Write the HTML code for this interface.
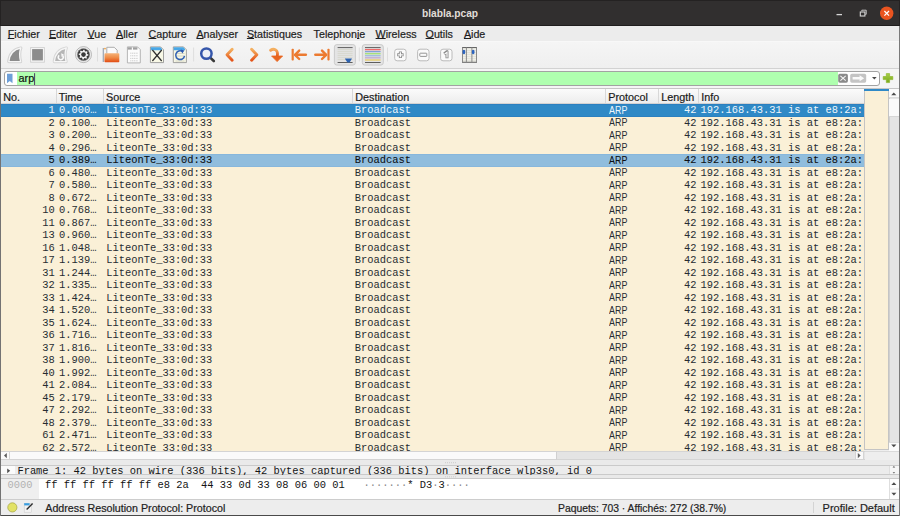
<!DOCTYPE html>
<html><head><meta charset="utf-8">
<style>
*{margin:0;padding:0;box-sizing:border-box}
html,body{width:900px;height:516px;overflow:hidden;background:#efefef;font-family:"Liberation Sans",sans-serif;}
div,span{position:absolute}
u{position:static}
.ov{position:absolute;left:0;top:0;z-index:50}
#title{left:0;top:0;width:900px;height:25.8px;background:#312f2f;border:1px solid #242222;border-bottom:1.2px solid #1f1d1d}
#title .t{left:-1px;width:900px;top:6.1px;text-align:center;color:#e0ddd8;font-weight:bold;font-size:10.2px;line-height:13px}
#menubar{left:0;top:25.8px;width:900px;height:15.3px;background:#ececec}
.mi{top:27.9px;font-size:10.7px;line-height:13px;color:#1e1e1e;white-space:nowrap;-webkit-text-stroke:0.2px #1e1e1e}
.mi u{text-decoration:underline;text-underline-offset:0px;text-decoration-thickness:1.3px}
#toolbar{left:0;top:41.1px;width:900px;height:27.3px;background:linear-gradient(#f5f5f5,#efefef);border-top:1px solid #f8f8f8}
#tbline{left:0;top:68.2px;width:900px;height:1px;background:#d2d2d2}
#fbar{left:0;top:69.2px;width:900px;height:19px;background:#f5f5f5}
#fbox{left:3.6px;top:71.3px;width:876px;height:14.9px;border:1px solid #a2a2a2;border-radius:3px;background:#fff;overflow:hidden}
#fgreen{left:12px;top:0;width:821.2px;height:100%;background:#afffaf}
#ftext{left:18.6px;top:72.2px;font-size:10.8px;line-height:13px;color:#101010;-webkit-text-stroke:0.2px #101010}
#tframe{left:0;top:88.2px;width:900px;height:1px;background:#c6c6c6}
#hdr{left:1px;top:89px;width:862.8px;height:14.7px;background:linear-gradient(#fbfbfb,#ededed);border-bottom:1px solid #d2d2d2}
.hc{top:0;height:13.7px;border-right:1px solid #d8d8d8;font-size:10.8px;line-height:17.4px;color:#1a1a1a;padding-left:2.2px;white-space:nowrap;-webkit-text-stroke:0.2px #1a1a1a}
#rows{left:1px;top:103.7px;width:862.8px;height:347.3px;background:#faf0d7;overflow:hidden}
.row{left:0;width:862.8px;height:12.5px;font-family:"Liberation Mono",monospace;font-size:10.42px;line-height:12.5px;color:#262c32;white-space:nowrap}
.row span{top:0.5px;transform:scaleY(1.08);transform-origin:50% 58%}
.row.sel{height:13px;background:#2f89c6;box-shadow:inset 0 1px 0 #2b7fc0,inset 0 -1px 0 #2b80c0;color:#eef6fc}
.row.rel{height:12.9px;background:#90bddd;box-shadow:inset 0 1px 0 #87b7dc,inset 0 -1px 0 #87b7dc;color:#0c1014;-webkit-text-stroke:0.08px #0c1014}
.no{right:809.00px;text-align:right}
.tm{left:58px}
.src{left:105.2px}
.dst{left:353.8px}
.row span.pr{left:607.9px;top:0.9px;font-family:"Liberation Sans",sans-serif;font-size:10px;transform:scaleX(0.89);transform-origin:0 50%;letter-spacing:0.1px}
.ln{right:167.20px;text-align:right}
.inf{left:699.6px}
#mini{left:863.8px;top:89.4px;width:25.2px;height:361px;background:#faf0d7;border-left:1px solid #c4c4c4;border-right:1px solid #c4c4c4;border-bottom:1px solid #c4c4c4}
#minisel{left:863.8px;top:89.4px;width:25.2px;height:1.8px;background:#2f89c7}
#vs{left:889px;top:89px;width:10px;height:362px;background:#e4e4e4;border-left:1px solid #cfcfcf}
#vsup{left:889.4px;top:89px;width:9.6px;height:9px;background:#fbfbfb;border-bottom:1px solid #dcdcdc}
#vsh{left:889.4px;top:99px;width:9.6px;height:17.7px;background:#fafafa;border-bottom:1px solid #d6d6d6}
#vsdn{left:889.4px;top:441.6px;width:9.6px;height:9.4px;background:#fbfbfb;border-top:1px solid #dcdcdc}
#hs{left:1px;top:451px;width:863.5px;height:9.2px;background:#e4e4e4;border-top:1px solid #d4d4d4;border-bottom:1px solid #d4d4d4}
#hsl{left:1px;top:451px;width:9.4px;height:9.2px;background:#fafafa;border:1px solid #d4d4d4;border-left:none}
#hsh{left:10.4px;top:451px;width:546.6px;height:9.2px;background:#fafafa;border-top:1px solid #d4d4d4;border-bottom:1px solid #d4d4d4;border-right:1px solid #d0d0d0}
#hsr{left:854.8px;top:451px;width:9.7px;height:9.2px;background:#fafafa;border:1px solid #d4d4d4}
#corner{left:864.5px;top:451px;width:34.5px;height:9.2px;background:#eeeeee;border-top:1px solid #dadada}
#split1{left:0;top:460.2px;width:900px;height:5px;background:#eaeaea}
#detail{left:1px;top:465.2px;width:898px;height:9.6px;background:#ececec;border-top:1px solid #cacaca;border-bottom:1px solid #cacaca}
#dexp{left:1px;top:466.2px;width:14.3px;height:7.6px;background:#fbfbfb}
#dsb{left:889.3px;top:466.2px;width:9.7px;height:7.6px;background:#f6f6f6;border-left:1px solid #dedede}
#dtext{left:17.4px;top:464.9px;transform:scaleY(1.08);transform-origin:0 60%;font-family:"Liberation Mono",monospace;font-size:10.42px;line-height:13px;color:#141414;white-space:nowrap}
#split2{left:0;top:474.8px;width:900px;height:3.5px;background:#e9e9e9}
#hex{left:1px;top:478.2px;width:898px;height:21.2px;background:#fff;border-top:1px solid #cacaca}
#hexoff{left:1px;top:479.2px;width:37.7px;height:20.2px;background:#efefef}
#hsb{left:889.3px;top:479.2px;width:9.7px;height:20.2px;background:#f0f0f0;border-left:1px solid #dedede}
#hsbup{left:889.8px;top:479.2px;width:9.2px;height:9px;background:#fdfdfd}
#hsbdn{left:889.8px;top:490px;width:9.2px;height:9.4px;background:#fdfdfd}
#hoff{left:7.6px;top:479.4px;transform:scaleY(1.08);transform-origin:0 60%;font-family:"Liberation Mono",monospace;font-size:10.42px;line-height:13px;color:#b2b2b2;white-space:pre}
#hextext{left:45px;top:479.4px;transform:scaleY(1.08);transform-origin:0 60%;font-family:"Liberation Mono",monospace;font-size:10.42px;line-height:13px;color:#141414;white-space:pre}
#status{left:0;top:499.4px;width:900px;height:16.6px;background:#ededed;border-top:1px solid #cdcdcd}
#sbot{left:0;top:514.8px;width:900px;height:1.2px;background:#4a4a4a}
.st{top:502.1px;font-size:10.7px;line-height:13px;color:#222;white-space:nowrap;-webkit-text-stroke:0.2px #222}
#ssep1{left:812.6px;top:502px;width:1px;height:11px;background:#d4d4d4}
#lborder{left:0;top:25.8px;width:1px;height:490.2px;background:#737373}
#rborder{left:898.8px;top:25.8px;width:1.2px;height:490.2px;background:#7a7a7a}
</style></head><body>
<div id="title"><div class="t">blabla.pcap</div></div>
<div id="menubar"></div>
<div class="mi" style="left:7.8px"><u>F</u>ichier</div>
<div class="mi" style="left:48.9px"><u>E</u>diter</div>
<div class="mi" style="left:87.5px"><u>V</u>ue</div>
<div class="mi" style="left:116.1px"><u>A</u>ller</div>
<div class="mi" style="left:148.6px"><u>C</u>apture</div>
<div class="mi" style="left:196.4px"><u>A</u>nalyser</div>
<div class="mi" style="left:246.9px"><u>S</u>tatistiques</div>
<div class="mi" style="left:313.6px">Telephon<u>i</u>e</div>
<div class="mi" style="left:375.6px"><u>W</u>ireless</div>
<div class="mi" style="left:425.6px"><u>O</u>utils</div>
<div class="mi" style="left:463.9px"><u>A</u>ide</div>
<div id="toolbar"></div>
<div id="tbline"></div>
<div id="fbar"></div>
<div id="fbox"><div id="fgreen"></div></div>
<div id="ftext">arp</div>
<div id="tframe"></div>
<div id="hdr">
<div class="hc" style="left:0;width:55.6px">No.</div>
<div class="hc" style="left:55.6px;width:47.3px">Time</div>
<div class="hc" style="left:102.9px;width:249.1px">Source</div>
<div class="hc" style="left:352px;width:253.1px">Destination</div>
<div class="hc" style="left:605.1px;width:52.9px">Protocol</div>
<div class="hc" style="left:658px;width:40px">Length</div>
<div class="hc" style="left:698px;width:164.79999999999995px;border-right:none">Info</div>
</div>
<div id="rows">
<div class="row sel" style="top:0.00px"><span class="no">1</span><span class="tm">0.000…</span><span class="src">LiteonTe_33:0d:33</span><span class="dst">Broadcast</span><span class="pr">ARP</span><span class="ln">42</span><span class="inf">192.168.43.31 is at e8:2a:</span></div>
<div class="row" style="top:12.50px"><span class="no">2</span><span class="tm">0.100…</span><span class="src">LiteonTe_33:0d:33</span><span class="dst">Broadcast</span><span class="pr">ARP</span><span class="ln">42</span><span class="inf">192.168.43.31 is at e8:2a:</span></div>
<div class="row" style="top:25.00px"><span class="no">3</span><span class="tm">0.200…</span><span class="src">LiteonTe_33:0d:33</span><span class="dst">Broadcast</span><span class="pr">ARP</span><span class="ln">42</span><span class="inf">192.168.43.31 is at e8:2a:</span></div>
<div class="row" style="top:37.50px"><span class="no">4</span><span class="tm">0.296…</span><span class="src">LiteonTe_33:0d:33</span><span class="dst">Broadcast</span><span class="pr">ARP</span><span class="ln">42</span><span class="inf">192.168.43.31 is at e8:2a:</span></div>
<div class="row rel" style="top:50.00px"><span class="no">5</span><span class="tm">0.389…</span><span class="src">LiteonTe_33:0d:33</span><span class="dst">Broadcast</span><span class="pr">ARP</span><span class="ln">42</span><span class="inf">192.168.43.31 is at e8:2a:</span></div>
<div class="row" style="top:62.50px"><span class="no">6</span><span class="tm">0.480…</span><span class="src">LiteonTe_33:0d:33</span><span class="dst">Broadcast</span><span class="pr">ARP</span><span class="ln">42</span><span class="inf">192.168.43.31 is at e8:2a:</span></div>
<div class="row" style="top:75.00px"><span class="no">7</span><span class="tm">0.580…</span><span class="src">LiteonTe_33:0d:33</span><span class="dst">Broadcast</span><span class="pr">ARP</span><span class="ln">42</span><span class="inf">192.168.43.31 is at e8:2a:</span></div>
<div class="row" style="top:87.50px"><span class="no">8</span><span class="tm">0.672…</span><span class="src">LiteonTe_33:0d:33</span><span class="dst">Broadcast</span><span class="pr">ARP</span><span class="ln">42</span><span class="inf">192.168.43.31 is at e8:2a:</span></div>
<div class="row" style="top:100.00px"><span class="no">10</span><span class="tm">0.768…</span><span class="src">LiteonTe_33:0d:33</span><span class="dst">Broadcast</span><span class="pr">ARP</span><span class="ln">42</span><span class="inf">192.168.43.31 is at e8:2a:</span></div>
<div class="row" style="top:112.50px"><span class="no">11</span><span class="tm">0.867…</span><span class="src">LiteonTe_33:0d:33</span><span class="dst">Broadcast</span><span class="pr">ARP</span><span class="ln">42</span><span class="inf">192.168.43.31 is at e8:2a:</span></div>
<div class="row" style="top:125.00px"><span class="no">13</span><span class="tm">0.960…</span><span class="src">LiteonTe_33:0d:33</span><span class="dst">Broadcast</span><span class="pr">ARP</span><span class="ln">42</span><span class="inf">192.168.43.31 is at e8:2a:</span></div>
<div class="row" style="top:137.50px"><span class="no">16</span><span class="tm">1.048…</span><span class="src">LiteonTe_33:0d:33</span><span class="dst">Broadcast</span><span class="pr">ARP</span><span class="ln">42</span><span class="inf">192.168.43.31 is at e8:2a:</span></div>
<div class="row" style="top:150.00px"><span class="no">17</span><span class="tm">1.139…</span><span class="src">LiteonTe_33:0d:33</span><span class="dst">Broadcast</span><span class="pr">ARP</span><span class="ln">42</span><span class="inf">192.168.43.31 is at e8:2a:</span></div>
<div class="row" style="top:162.50px"><span class="no">31</span><span class="tm">1.244…</span><span class="src">LiteonTe_33:0d:33</span><span class="dst">Broadcast</span><span class="pr">ARP</span><span class="ln">42</span><span class="inf">192.168.43.31 is at e8:2a:</span></div>
<div class="row" style="top:175.00px"><span class="no">32</span><span class="tm">1.335…</span><span class="src">LiteonTe_33:0d:33</span><span class="dst">Broadcast</span><span class="pr">ARP</span><span class="ln">42</span><span class="inf">192.168.43.31 is at e8:2a:</span></div>
<div class="row" style="top:187.50px"><span class="no">33</span><span class="tm">1.424…</span><span class="src">LiteonTe_33:0d:33</span><span class="dst">Broadcast</span><span class="pr">ARP</span><span class="ln">42</span><span class="inf">192.168.43.31 is at e8:2a:</span></div>
<div class="row" style="top:200.00px"><span class="no">34</span><span class="tm">1.520…</span><span class="src">LiteonTe_33:0d:33</span><span class="dst">Broadcast</span><span class="pr">ARP</span><span class="ln">42</span><span class="inf">192.168.43.31 is at e8:2a:</span></div>
<div class="row" style="top:212.50px"><span class="no">35</span><span class="tm">1.624…</span><span class="src">LiteonTe_33:0d:33</span><span class="dst">Broadcast</span><span class="pr">ARP</span><span class="ln">42</span><span class="inf">192.168.43.31 is at e8:2a:</span></div>
<div class="row" style="top:225.00px"><span class="no">36</span><span class="tm">1.716…</span><span class="src">LiteonTe_33:0d:33</span><span class="dst">Broadcast</span><span class="pr">ARP</span><span class="ln">42</span><span class="inf">192.168.43.31 is at e8:2a:</span></div>
<div class="row" style="top:237.50px"><span class="no">37</span><span class="tm">1.816…</span><span class="src">LiteonTe_33:0d:33</span><span class="dst">Broadcast</span><span class="pr">ARP</span><span class="ln">42</span><span class="inf">192.168.43.31 is at e8:2a:</span></div>
<div class="row" style="top:250.00px"><span class="no">38</span><span class="tm">1.900…</span><span class="src">LiteonTe_33:0d:33</span><span class="dst">Broadcast</span><span class="pr">ARP</span><span class="ln">42</span><span class="inf">192.168.43.31 is at e8:2a:</span></div>
<div class="row" style="top:262.50px"><span class="no">40</span><span class="tm">1.992…</span><span class="src">LiteonTe_33:0d:33</span><span class="dst">Broadcast</span><span class="pr">ARP</span><span class="ln">42</span><span class="inf">192.168.43.31 is at e8:2a:</span></div>
<div class="row" style="top:275.00px"><span class="no">41</span><span class="tm">2.084…</span><span class="src">LiteonTe_33:0d:33</span><span class="dst">Broadcast</span><span class="pr">ARP</span><span class="ln">42</span><span class="inf">192.168.43.31 is at e8:2a:</span></div>
<div class="row" style="top:287.50px"><span class="no">45</span><span class="tm">2.179…</span><span class="src">LiteonTe_33:0d:33</span><span class="dst">Broadcast</span><span class="pr">ARP</span><span class="ln">42</span><span class="inf">192.168.43.31 is at e8:2a:</span></div>
<div class="row" style="top:300.00px"><span class="no">47</span><span class="tm">2.292…</span><span class="src">LiteonTe_33:0d:33</span><span class="dst">Broadcast</span><span class="pr">ARP</span><span class="ln">42</span><span class="inf">192.168.43.31 is at e8:2a:</span></div>
<div class="row" style="top:312.50px"><span class="no">48</span><span class="tm">2.379…</span><span class="src">LiteonTe_33:0d:33</span><span class="dst">Broadcast</span><span class="pr">ARP</span><span class="ln">42</span><span class="inf">192.168.43.31 is at e8:2a:</span></div>
<div class="row" style="top:325.00px"><span class="no">61</span><span class="tm">2.471…</span><span class="src">LiteonTe_33:0d:33</span><span class="dst">Broadcast</span><span class="pr">ARP</span><span class="ln">42</span><span class="inf">192.168.43.31 is at e8:2a:</span></div>
<div class="row" style="top:337.50px"><span class="no">62</span><span class="tm">2.572…</span><span class="src">LiteonTe_33:0d:33</span><span class="dst">Broadcast</span><span class="pr">ARP</span><span class="ln">42</span><span class="inf">192.168.43.31 is at e8:2a:</span></div>
</div>
<div id="mini"></div>
<div id="minisel"></div>
<div id="vs"></div><div id="vsup"></div><div id="vsh"></div><div id="vsdn"></div>
<div id="hs"></div><div id="hsl"></div><div id="hsh"></div><div id="hsr"></div>
<div id="corner"></div>
<div id="split1"></div>
<div id="detail"></div><div id="dexp"></div><div id="dsb"></div>
<div id="dtext">Frame 1: 42 bytes on wire (336 bits), 42 bytes captured (336 bits) on interface wlp3s0, id 0</div>
<div id="split2"></div>
<div id="hex"></div><div id="hexoff"></div><div id="hsb"></div><div id="hsbup"></div><div id="hsbdn"></div>
<div id="hoff">0000</div>
<div id="hextext">ff ff ff ff ff ff e8 2a  44 33 0d 33 08 06 00 01   <span style="position:static;color:#8a8a8a">·······</span>* D3<span style="position:static;color:#8a8a8a">·</span>3<span style="position:static;color:#8a8a8a">····</span></div>
<div id="status"></div>
<div id="ssep1"></div>
<div class="st" style="left:45.3px">Address Resolution Protocol: Protocol</div>
<div class="st" style="left:558px;font-size:10.35px">Paquets: 703 · Affichés: 272 (38.7%)</div>
<div class="st" style="left:822.6px;font-size:11px">Profile: Default</div>
<div id="sbot"></div>
<div id="lborder"></div>
<div id="rborder"></div>
<svg class="ov" width="900" height="516" viewBox="0 0 900 516">
<defs>
<linearGradient id="og" x1="0" y1="0" x2="0" y2="1"><stop offset="0" stop-color="#f4b060"/><stop offset="1" stop-color="#e4541a"/></linearGradient>
<linearGradient id="fold" x1="0" y1="0" x2="0" y2="1"><stop offset="0" stop-color="#f5b37a"/><stop offset="0.5" stop-color="#ef8a45"/><stop offset="1" stop-color="#e14a12"/></linearGradient>
<linearGradient id="pg" x1="0" y1="0" x2="0" y2="1"><stop offset="0" stop-color="#a8d048"/><stop offset="1" stop-color="#78a818"/></linearGradient>
</defs>
<line x1="836.5" y1="14.6" x2="842" y2="14.6" stroke="#d6d6d6" stroke-width="1.3"/>
<rect x="860.3" y="12" width="4.6" height="4" fill="none" stroke="#d6d6d6" stroke-width="1.1"/>
<path d="M861.8 11.2 V10.2 H866.2 V14.3 H865.3" fill="none" stroke="#d6d6d6" stroke-width="0.9"/>
<circle cx="886.7" cy="13.3" r="6.7" fill="#e95420"/>
<path d="M884.4 11 L889 15.6 M889 11 L884.4 15.6" stroke="#fff" stroke-width="1.25"/>
<path d="M8.8 61.6 C9.4 55 13 49.6 20.8 48 C19.4 51.5 19.4 57 20.6 61.6 Z" fill="none" stroke="#d2d2d2" stroke-width="3.2" stroke-linejoin="round"/>
<path d="M8.8 61.6 C9.4 55 13 49.6 20.8 48 C19.4 51.5 19.4 57 20.6 61.6 Z" fill="#8c8c8c" stroke="#f6f6f6" stroke-width="1.3" stroke-linejoin="round"/>
<rect x="30.6" y="47.6" width="13.8" height="14.6" fill="#f6f6f6" stroke="#d0d0d0" stroke-width="0.9"/>
<rect x="32.1" y="49.1" width="10.8" height="11.3" fill="#8c8c8c"/>
<path d="M54.3 61.6 C54.9 55 58.5 49.6 66.3 48 C64.9 51.5 64.9 57 66.1 61.6 Z" fill="none" stroke="#d6d6d6" stroke-width="3.2" stroke-linejoin="round"/>
<path d="M54.3 61.6 C54.9 55 58.5 49.6 66.3 48 C64.9 51.5 64.9 57 66.1 61.6 Z" fill="#b6b6b6" stroke="#f6f6f6" stroke-width="1.3" stroke-linejoin="round"/>
<path d="M59.2 55.3 A2.5 2.5 0 1 0 62.6 55.6" fill="none" stroke="#fafafa" stroke-width="1.6"/>
<path d="M61.2 53.2 L63.8 54.6 L61.6 57 Z" fill="#fafafa"/>
<circle cx="83.5" cy="54.6" r="8" fill="#efefef" stroke="#a8a8a8" stroke-width="0.8"/>
<circle cx="83.5" cy="54.6" r="6.2" fill="#3c3c3c" stroke="#8a8a8a" stroke-width="0.5"/>
<polygon points="88.40,54.60 88.31,55.56 86.83,55.98 86.49,56.60 86.96,58.06 86.22,58.67 84.88,57.93 84.20,58.13 83.50,59.50 82.54,59.41 82.12,57.93 81.50,57.59 80.04,58.06 79.43,57.32 80.17,55.98 79.97,55.30 78.60,54.60 78.69,53.64 80.17,53.22 80.51,52.60 80.04,51.14 80.78,50.53 82.12,51.27 82.80,51.07 83.50,49.70 84.46,49.79 84.88,51.27 85.50,51.61 86.96,51.14 87.57,51.88 86.83,53.22 87.03,53.90" fill="#f4f4f4"/>
<circle cx="83.5" cy="54.6" r="2.3" fill="#3a3a3a"/>
<line x1="97.5" y1="47.5" x2="97.5" y2="61.5" stroke="#dedede" stroke-width="1"/>
<line x1="193.6" y1="47.5" x2="193.6" y2="61.5" stroke="#dedede" stroke-width="1"/>
<line x1="359.3" y1="47.5" x2="359.3" y2="61.5" stroke="#dedede" stroke-width="1"/>
<line x1="387.5" y1="47.5" x2="387.5" y2="61.5" stroke="#dedede" stroke-width="1"/>
<path d="M103.3 48 V62" stroke="#9aa4b0" stroke-width="1.2"/>
<circle cx="105" cy="48.6" r="0.9" fill="#f0a040"/>
<path d="M106.8 53.5 V47.3 H114.2 L117.2 50.2 V53.5" fill="#fbfbfb" stroke="#9a9a9a" stroke-width="0.8"/>
<rect x="104.5" y="53.2" width="14.8" height="9.1" rx="0.8" fill="url(#fold)"/>
<path d="M127.4 46.9 H137.6 L140.3 49.6 V62.9 H127.4 Z" fill="#fcfcfc" stroke="#a4a4a4" stroke-width="0.8"/>
<rect x="127.8" y="47.3" width="4" height="2.3" fill="#a0a0a0"/><rect x="133" y="47.3" width="4.4" height="2.3" fill="#a0a0a0"/>
<line x1="130.2" y1="53.2" x2="138" y2="53.2" stroke="#c8c8c8" stroke-width="0.9" stroke-dasharray="1.2 0.6"/>
<line x1="130.2" y1="55.8" x2="138" y2="55.8" stroke="#c8c8c8" stroke-width="0.9" stroke-dasharray="1.2 0.6"/>
<line x1="130.2" y1="58.4" x2="138" y2="58.4" stroke="#c8c8c8" stroke-width="0.9" stroke-dasharray="1.2 0.6"/>
<line x1="130.2" y1="60.8" x2="138" y2="60.8" stroke="#c8c8c8" stroke-width="0.9" stroke-dasharray="1.2 0.6"/>
<path d="M150.4 46.9 H160.6 L163.5 49.8 V62.6 H150.4 Z" fill="#f8f8e6" stroke="#8c8c8c" stroke-width="0.8"/>
<path d="M150.8 47.3 H160.4 L162 49 V50.2 H150.8 Z" fill="#48a8e8"/>
<path d="M152.4 50 L161.7 61 M161.7 50 L152.4 61" stroke="#303030" stroke-width="1.25"/>
<path d="M173.3 46.9 H183.5 L186.4 49.8 V62.6 H173.3 Z" fill="#f8f8e6" stroke="#8c8c8c" stroke-width="0.8"/>
<path d="M173.7 47.3 H183.3 L185 49 V50.2 H173.7 Z" fill="#48a8e8"/>
<line x1="175.5" y1="53.5" x2="184.5" y2="53.5" stroke="#c8c8b8" stroke-width="0.7"/>
<line x1="175.5" y1="56" x2="184.5" y2="56" stroke="#c8c8b8" stroke-width="0.7"/>
<line x1="175.5" y1="58.5" x2="184.5" y2="58.5" stroke="#c8c8b8" stroke-width="0.7"/>
<line x1="175.5" y1="61" x2="184.5" y2="61" stroke="#c8c8b8" stroke-width="0.7"/>
<path d="M182.4 51.4 A4.4 4.4 0 1 0 184.5 55.8" fill="none" stroke="#3060b4" stroke-width="1.5"/>
<path d="M180.6 49.6 L184.4 50.6 L182.2 53.6 Z" fill="#2a58b0"/>
<line x1="210.2" y1="57.6" x2="213.8" y2="61" stroke="#3a3a3a" stroke-width="2.6" stroke-linecap="round"/>
<circle cx="206.4" cy="53.6" r="5.2" fill="#eef1f6" stroke="#3556aa" stroke-width="2.5"/>
<polyline points="232.2,49.3 227,54.7 232.2,60.2" fill="none" stroke="url(#og)" stroke-width="2.9" stroke-linecap="round" stroke-linejoin="round"/>
<polyline points="251.6,49.3 256.8,54.7 251.6,60.2" fill="none" stroke="url(#og)" stroke-width="2.9" stroke-linecap="round" stroke-linejoin="round"/>
<path d="M270.6 50.2 C273.5 48.2 278.8 49.2 277.2 56.5" fill="none" stroke="url(#og)" stroke-width="2.9" stroke-linecap="round"/>
<path d="M271.6 56 H282.6 L277.1 61.6 Z" fill="#e8641e" stroke="#e8641e" stroke-width="0.8" stroke-linejoin="round"/>
<rect x="291.6" y="48.8" width="2.2" height="11.8" rx="0.8" fill="#ec7a30"/>
<path d="M295.6 54.8 H305.8" stroke="#ec7a30" stroke-width="2.6" stroke-linecap="round"/>
<polyline points="299.2,50.6 295,54.8 299.2,59" fill="none" stroke="#ec7a30" stroke-width="2.4" stroke-linecap="round" stroke-linejoin="round"/>
<rect x="327.4" y="48.8" width="2.2" height="11.8" rx="0.8" fill="#ec7a30"/>
<path d="M315.4 54.8 H325.6" stroke="#ec7a30" stroke-width="2.6" stroke-linecap="round"/>
<polyline points="322,50.6 326.2,54.8 322,59" fill="none" stroke="#ec7a30" stroke-width="2.4" stroke-linecap="round" stroke-linejoin="round"/>
<rect x="334.4" y="44.6" width="21" height="20.5" rx="2.5" fill="#e4e4e4" stroke="#c6c6c6" stroke-width="0.9"/>
<line x1="337.6" y1="47.6" x2="352.6" y2="47.6" stroke="#5e5e5e" stroke-width="1"/>
<line x1="337.6" y1="49.6" x2="352.6" y2="49.6" stroke="#d6d6cc" stroke-width="0.9"/>
<line x1="337.6" y1="51.6" x2="352.6" y2="51.6" stroke="#d6d6cc" stroke-width="0.9"/>
<line x1="337.6" y1="53.6" x2="352.6" y2="53.6" stroke="#d6d6cc" stroke-width="0.9"/>
<line x1="337.6" y1="55.6" x2="352.6" y2="55.6" stroke="#d6d6cc" stroke-width="0.9"/>
<line x1="337.6" y1="57.6" x2="352.6" y2="57.6" stroke="#d6d6cc" stroke-width="0.9"/>
<line x1="337.6" y1="59.6" x2="352.6" y2="59.6" stroke="#d6d6cc" stroke-width="0.9"/>
<line x1="337.6" y1="62.5" x2="352.6" y2="62.5" stroke="#5e5e5e" stroke-width="1"/>
<path d="M344.8 58.6 H352 L349.6 62.4 H347.4 Z" fill="#2c62b0"/>
<rect x="362.3" y="44.6" width="21" height="20.5" rx="2.5" fill="#e4e4e4" stroke="#c6c6c6" stroke-width="0.9"/>
<line x1="365" y1="47.6" x2="380.6" y2="47.6" stroke="#5e5e5e" stroke-width="1"/>
<line x1="365" y1="49.6" x2="380.6" y2="49.6" stroke="#f06a6a" stroke-width="1.3"/>
<line x1="365" y1="51.6" x2="380.6" y2="51.6" stroke="#82a2d8" stroke-width="1.3"/>
<line x1="365" y1="53.7" x2="380.6" y2="53.7" stroke="#a6e07c" stroke-width="1.4"/>
<line x1="365" y1="55.7" x2="380.6" y2="55.7" stroke="#a4bee0" stroke-width="1.4"/>
<line x1="365" y1="57.8" x2="380.6" y2="57.8" stroke="#c4b2d2" stroke-width="1.5"/>
<line x1="365" y1="60.0" x2="380.6" y2="60.0" stroke="#e8d282" stroke-width="1.7"/>
<line x1="365" y1="62.5" x2="380.6" y2="62.5" stroke="#5e5e5e" stroke-width="1"/>
<rect x="394.7" y="49.2" width="11.4" height="11.6" rx="2.4" fill="#fafafa" stroke="#b4b4b4" stroke-width="0.9"/>
<rect x="417.6" y="49.2" width="11.4" height="11.6" rx="2.4" fill="#fafafa" stroke="#b4b4b4" stroke-width="0.9"/>
<rect x="440.6" y="49.2" width="11.4" height="11.6" rx="2.4" fill="#fafafa" stroke="#b4b4b4" stroke-width="0.9"/>
<path d="M400.4 51.6 V58 M397.2 54.8 H403.6" stroke="#8a8a8a" stroke-width="3"/>
<path d="M400.4 52.3 V57.3 M397.9 54.8 H402.9" stroke="#fafafa" stroke-width="1.3"/>
<rect x="419.8" y="53.2" width="7" height="3.2" rx="0.6" fill="#fafafa" stroke="#8a8a8a" stroke-width="0.9"/>
<path d="M444.2 54 L447 51.6 V58.2" fill="none" stroke="#8a8a8a" stroke-width="3" stroke-linejoin="round"/>
<path d="M444.6 54 L447 52.3 V57.6" fill="none" stroke="#fafafa" stroke-width="1.2"/>
<rect x="462.2" y="47.4" width="14.6" height="15" fill="#e4e4dc"/>
<line x1="462.2" y1="49.5" x2="476.8" y2="49.5" stroke="#f2f2ec" stroke-width="0.8"/>
<line x1="462.2" y1="51.5" x2="476.8" y2="51.5" stroke="#f2f2ec" stroke-width="0.8"/>
<line x1="462.2" y1="53.5" x2="476.8" y2="53.5" stroke="#f2f2ec" stroke-width="0.8"/>
<line x1="462.2" y1="55.5" x2="476.8" y2="55.5" stroke="#f2f2ec" stroke-width="0.8"/>
<line x1="462.2" y1="57.5" x2="476.8" y2="57.5" stroke="#f2f2ec" stroke-width="0.8"/>
<line x1="462.2" y1="59.5" x2="476.8" y2="59.5" stroke="#f2f2ec" stroke-width="0.8"/>
<line x1="462" y1="47.5" x2="477" y2="47.5" stroke="#666" stroke-width="1"/>
<line x1="462" y1="62.3" x2="477" y2="62.3" stroke="#666" stroke-width="1"/>
<line x1="462.5" y1="47.5" x2="462.5" y2="62.3" stroke="#8a8a8a" stroke-width="1"/>
<line x1="466.4" y1="47.5" x2="466.4" y2="62.3" stroke="#8a8a8a" stroke-width="1"/>
<line x1="471.9" y1="47.5" x2="471.9" y2="62.3" stroke="#8a8a8a" stroke-width="1"/>
<line x1="476.5" y1="47.5" x2="476.5" y2="62.3" stroke="#8a8a8a" stroke-width="1"/>
<ellipse cx="463.9" cy="52" rx="1.4" ry="2.2" fill="#2c64c0"/>
<ellipse cx="473.2" cy="52" rx="1.4" ry="2.2" fill="#2c64c0"/>
<path d="M7 73.8 H12.5 V83.2 L9.75 80.9 L7 83.2 Z" fill="#6d9fd8"/>
<line x1="34.6" y1="73.2" x2="34.6" y2="85" stroke="#4a3a5c" stroke-width="1"/>
<rect x="838.2" y="73.8" width="9.7" height="8.9" rx="1.6" fill="#8a8a8a"/>
<path d="M840.4 75.9 L845.7 80.7 M845.7 75.9 L840.4 80.7" stroke="#f4f4f4" stroke-width="1.1"/>
<rect x="850.2" y="73.8" width="16" height="8.9" rx="1.6" fill="#c4c4c4"/>
<path d="M852.6 77 H859.6 V75.2 L864.2 78.25 L859.6 81.3 V79.5 H852.6 Z" fill="#fafafa"/>
<path d="M872 77 H876.7 L874.35 79.4 Z" fill="#4a4a4a"/>
<path d="M886.3 73.6 H889.6 V76.5 H892.8 V79.6 H889.6 V82.6 H886.3 V79.6 H883.2 V76.5 H886.3 Z" fill="url(#pg)" stroke="#86b020" stroke-width="0.6" stroke-linejoin="round"/>
<path d="M891.2 95.3 H896.4 L893.8 92.6 Z" fill="#4a4a4a"/>
<path d="M891.2 444.5 H896.4 L893.8 447.2 Z" fill="#4a4a4a"/>
<path d="M4 455.6 L6.8 452.9 V458.3 Z" fill="#5a5a5a"/>
<path d="M860.6 455.6 L857.8 452.9 V458.3 Z" fill="#5a5a5a"/>
<path d="M7.2 468.4 L10.2 470.8 L7.2 473.2 Z" fill="#505050"/>
<path d="M892.6 467.4 H895.2 L893.9 466 Z" fill="#555"/>
<path d="M892.6 472.2 H895.2 L893.9 473.6 Z" fill="#555"/>
<path d="M891.4 485 H896.4 L893.9 482.3 Z" fill="#4a4a4a"/>
<path d="M891.4 492.8 H896.4 L893.9 495.5 Z" fill="#4a4a4a"/>
<rect x="445.0" y="462.3" width="0.9" height="0.9" fill="#c4c4c4"/>
<rect x="447.0" y="462.3" width="0.9" height="0.9" fill="#c4c4c4"/>
<rect x="449.0" y="462.3" width="0.9" height="0.9" fill="#c4c4c4"/>
<rect x="451.0" y="462.3" width="0.9" height="0.9" fill="#c4c4c4"/>
<rect x="453.0" y="462.3" width="0.9" height="0.9" fill="#c4c4c4"/>
<rect x="455.0" y="462.3" width="0.9" height="0.9" fill="#c4c4c4"/>
<rect x="445.0" y="476.4" width="0.9" height="0.9" fill="#c4c4c4"/>
<rect x="447.0" y="476.4" width="0.9" height="0.9" fill="#c4c4c4"/>
<rect x="449.0" y="476.4" width="0.9" height="0.9" fill="#c4c4c4"/>
<rect x="451.0" y="476.4" width="0.9" height="0.9" fill="#c4c4c4"/>
<rect x="453.0" y="476.4" width="0.9" height="0.9" fill="#c4c4c4"/>
<rect x="455.0" y="476.4" width="0.9" height="0.9" fill="#c4c4c4"/>
<circle cx="12.35" cy="507.4" r="4.6" fill="#e2e266" stroke="#a4a444" stroke-width="0.7"/>
<rect x="24.2" y="503.3" width="7.4" height="8.9" fill="#f2f2f2" stroke="#c8c8c8" stroke-width="0.5"/>
<rect x="24.2" y="503.2" width="5.4" height="2.2" fill="#3a9ee0"/>
<line x1="26.6" y1="509.6" x2="32.6" y2="503.4" stroke="#2e2e2e" stroke-width="1.4"/>
</svg>
</body></html>
